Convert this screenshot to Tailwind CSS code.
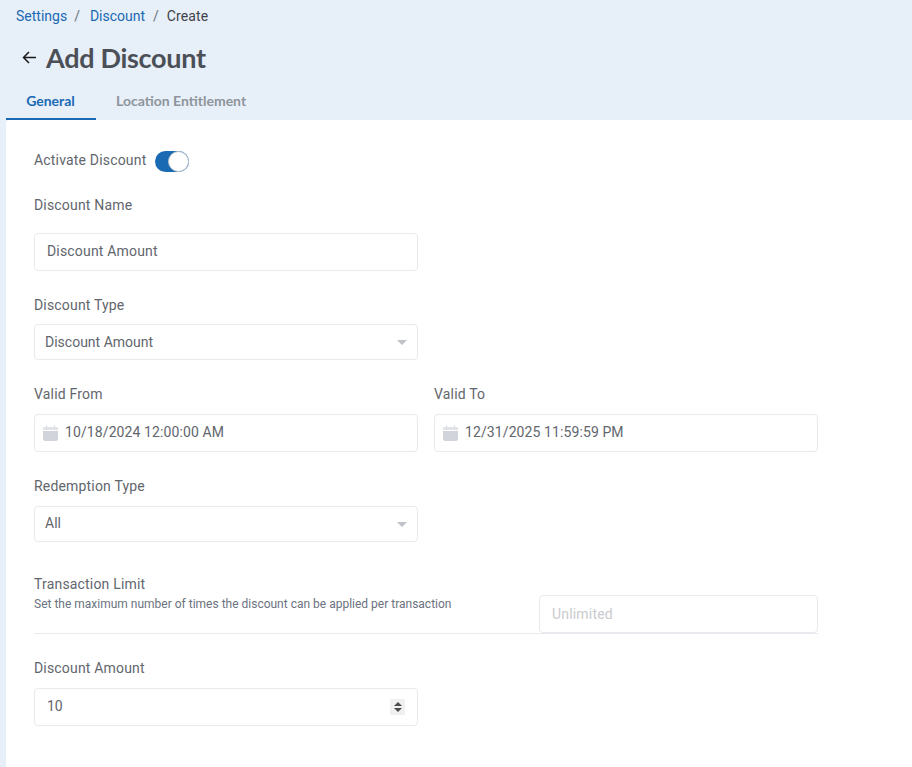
<!doctype html>
<html>
<head>
<meta charset="utf-8">
<script src="https://cdn.jsdelivr.net/npm/@tailwindcss/browser@4"></script>
</head>
<body class="m-0 h-[767px] w-[912px] overflow-hidden bg-[#e7eff8] font-['Roboto',sans-serif] text-[14px] text-[#62666d]">
<header class="h-[120px]">
  <nav class="flex h-[32px] items-center pl-[16px] text-[14px] leading-none text-[#6b7280]">
    <span class="text-[#1a69b3]">Settings</span><span class="ml-[7px]">/</span>
    <span class="ml-[10px] text-[#1a69b3]">Discount</span><span class="ml-[8px]">/</span>
    <span class="ml-[8px] tracking-[0.1px] text-[#3f4349]">Create</span>
  </nav>
  <div class="mt-[5px] flex h-[40px] items-center pl-[22px]">
    <svg class="h-[15px] w-[15px]" viewBox="0 0 15 15" fill="none" stroke="#1b1b1b" stroke-width="1.5"><path d="M14 7.500H1.500M7 2 1.500 7.500 7 13"/></svg>
    <h1 class="ml-[9px] font-['Lato',sans-serif] text-[27px] leading-none font-bold tracking-[-0.3px] text-[#4b4f57]">Add Discount</h1>
  </div>
  <div class="mt-[6px] flex h-[37px] pl-[6px] font-['Lato',sans-serif] text-[14px] font-bold">
    <div class="flex h-[37px] w-[90px] items-center justify-center border-b-[2px] border-[#1a69b3] pr-[1px] text-[#1a69b3]">General</div>
    <div class="ml-[20px] flex h-[37px] items-center pb-[2px] text-[#8e949c]">Location Entitlement</div>
  </div>
</header>
<main class="ml-[6px] h-[647px] rounded-tl-[4px] bg-white pt-[20px] pl-[28px] tracking-[0.18px]">
  <div class="flex h-[40px] items-center pt-[3px]">
    <span class="relative top-[-1px]">Activate Discount</span>
    <div class="ml-[9px] flex h-[21px] w-[34px] items-center justify-end rounded-full bg-[#1a69b3]">
      <div class="h-[21px] w-[21px] rounded-full border border-[#b9c0c9] bg-white"></div>
    </div>
  </div>
  <div class="mt-[15px] flex h-[20px] items-center">Discount Name</div>
  <div class="mt-[18px] flex h-[38px] w-[384px] items-center rounded-[4px] border border-[#e8eaed] pb-[2px] pl-[12px]">Discount Amount</div>
  <div class="mt-[24px] flex h-[20px] items-center">Discount Type</div>
  <div class="mt-[9px] flex h-[36px] w-[384px] items-center justify-between rounded-[4px] border border-[#e8eaed] pr-[10px] pl-[10px] tracking-normal">
    <span>Discount Amount</span>
    <span class="h-0 w-0 border-x-[5.5px] border-t-[5px] border-x-transparent border-t-[#bfc2c6]"></span>
  </div>
  <div class="mt-[24px] flex w-[784px] gap-[16px]">
    <div class="w-[384px]">
      <div class="flex h-[20px] items-center">Valid From</div>
      <div class="mt-[10px] flex h-[38px] items-center rounded-[4px] border border-[#e8eaed] pl-[8px]">
        <svg class="h-[16px] w-[15px]" viewBox="0 0 15 16"><path d="M3.500 .5v3M11.500 .5v3" stroke="#d3d6dc" stroke-width="1"/><path d="M2 2h11a2 2 0 0 1 2 2v1H0V4a2 2 0 0 1 2-2z" fill="#dfe2e7"/><path d="M0 6h15v8a2 2 0 0 1-2 2H2a2 2 0 0 1-2-2z" fill="#d1d5db"/></svg>
        <span class="relative top-[-1px] ml-[7px] tracking-[0.1px]">10/18/2024 12:00:00 AM</span>
      </div>
    </div>
    <div class="w-[384px]">
      <div class="flex h-[20px] items-center">Valid To</div>
      <div class="mt-[10px] flex h-[38px] items-center rounded-[4px] border border-[#e8eaed] pl-[8px]">
        <svg class="h-[16px] w-[15px]" viewBox="0 0 15 16"><path d="M3.500 .5v3M11.500 .5v3" stroke="#d3d6dc" stroke-width="1"/><path d="M2 2h11a2 2 0 0 1 2 2v1H0V4a2 2 0 0 1 2-2z" fill="#dfe2e7"/><path d="M0 6h15v8a2 2 0 0 1-2 2H2a2 2 0 0 1-2-2z" fill="#d1d5db"/></svg>
        <span class="relative top-[-1px] ml-[7px] tracking-[0.1px]">12/31/2025 11:59:59 PM</span>
      </div>
    </div>
  </div>
  <div class="mt-[24px] flex h-[20px] items-center">Redemption Type</div>
  <div class="mt-[10px] flex h-[36px] w-[384px] items-center justify-between rounded-[4px] border border-[#e8eaed] pr-[10px] pl-[10px] tracking-normal">
    <span class="relative top-[-1px]">All</span>
    <span class="h-0 w-0 border-x-[5.5px] border-t-[5px] border-x-transparent border-t-[#bfc2c6]"></span>
  </div>
  <div class="mt-[32px] flex h-[60px] w-[784px] items-end justify-between border-b border-[#e8eaed]">
    <div class="self-start">
      <div class="h-[20px] leading-[20px]">Transaction Limit</div>
      <div class="mt-[1px] text-[12px] leading-[18px] tracking-normal text-[#6b7280]">Set the maximum number of times the discount can be applied per transaction</div>
    </div>
    <div class="flex h-[38px] w-[279px] items-center rounded-[4px] border border-[#e8eaed] pl-[12px] text-[#c9cbce]">Unlimited</div>
  </div>
  <div class="mt-[24px] flex h-[20px] items-center">Discount Amount</div>
  <div class="mt-[10px] flex h-[38px] w-[384px] items-center justify-between rounded-[4px] border border-[#e8eaed] pr-[12px] pl-[12px] tracking-normal">
    <span class="relative top-[-1px]">10</span>
    <span class="flex h-[16px] w-[15px] flex-col items-center justify-center gap-[2px] bg-[#f0f0f0]">
      <span class="h-0 w-0 border-x-[4px] border-b-[4px] border-x-transparent border-b-[#4a4a4a]"></span>
      <span class="h-0 w-0 border-x-[4px] border-t-[4px] border-x-transparent border-t-[#4a4a4a]"></span>
    </span>
  </div>
</main>
</body>
</html>
